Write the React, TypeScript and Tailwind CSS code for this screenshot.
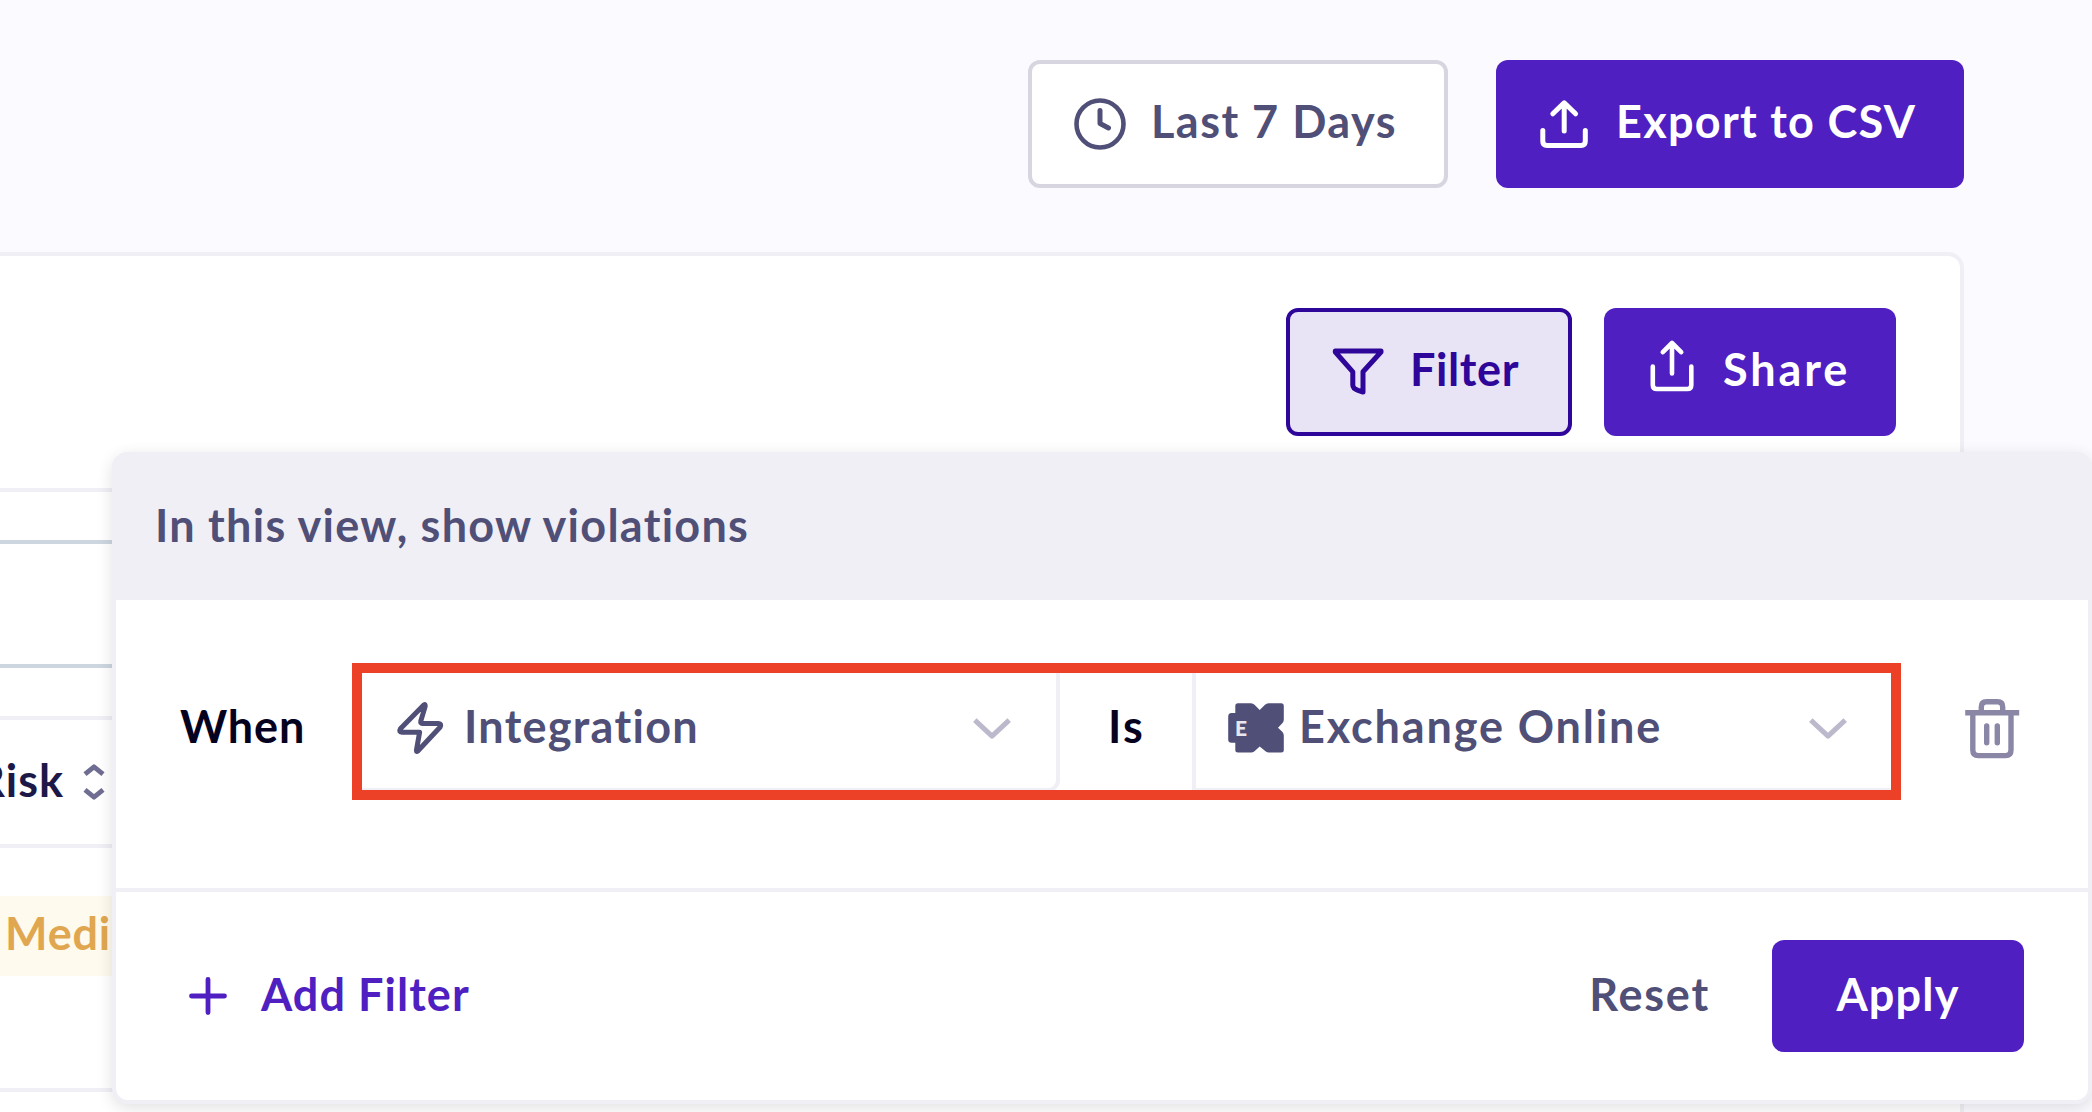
import React from "react";

const ClockIcon = () => (
  <svg className="size-14 shrink-0" viewBox="0 0 56 56" fill="none" stroke="currentColor" strokeLinecap="round" strokeLinejoin="round">
    <circle cx="28" cy="28" r="23.5" strokeWidth="4.6" />
    <path d="M28 14.5V27.5L36.5 32" strokeWidth="5" />
  </svg>
);

const ExportIcon = () => (
  <svg className="size-14 shrink-0" viewBox="0 0 56 56" fill="none" stroke="currentColor" strokeWidth="5" strokeLinecap="round" strokeLinejoin="round">
    <path d="M28.2 35V7M16.8 17.8L28.2 6.8L39.6 17.8" />
    <path d="M6.8 34.5V45.2Q6.8 49.4 11 49.4H45.1Q49.3 49.4 49.3 45.2V34.5" />
  </svg>
);

const FunnelIcon = () => (
  <svg className="mb-1 size-14 shrink-0" viewBox="0 0 56 56" fill="none" stroke="currentColor" strokeWidth="5" strokeLinejoin="round">
    <path d="M5.3 8.9H51V10L33 29.8V50L28 48.4Q22.8 46.5 22.8 43V29.8L5.3 10Z" />
  </svg>
);

const ShareIcon = () => (
  <svg className="mb-4 h-14 w-12 shrink-0" viewBox="0 0 48 56" fill="none" stroke="currentColor" strokeWidth="4.6" strokeLinecap="round" strokeLinejoin="round">
    <path d="M24 37.5V7M14.8 16.2L24 7L33.2 16.2" />
    <path d="M4.8 30.5V49Q4.8 53 8.8 53H39.3Q43.3 53 43.3 49V30.5" />
  </svg>
);

const BoltIcon = () => (
  <svg className="mt-1 h-14 w-[52px] shrink-0" viewBox="0 0 52 56" fill="none" stroke="currentColor" strokeWidth="5" strokeLinecap="round" strokeLinejoin="round">
    <path d="M30 4.8L6.4 28.8Q4.4 32 8 32.3H25.6L22.4 50.5Q22.4 52 23.8 51L46 27.2Q48 23.6 44.4 23.4H28.5Q26.3 23.2 26.8 21L31.2 6.4Q31.4 4 30 4.8Z" />
  </svg>
);

const ChevronIcon = () => (
  <svg className="mt-1.5 h-6 w-10 shrink-0 text-[#bbb9cb]" viewBox="0 0 40 24" fill="none" stroke="currentColor" strokeWidth="5" strokeLinejoin="round">
    <path d="M2.8 3.2L20 19.2L37.2 3.2" />
  </svg>
);

const ExchangeIcon = () => (
  <svg className="mt-1 h-[52px] w-14 shrink-0" viewBox="0 0 56 52">
    <path
      fill="currentColor"
      d="M7.3 11V4Q7.3 1.3 10 1.3H23Q25 1.3 26.5 2.8L31.7 8L37 2.8Q38.5 1.3 40.5 1.3H53.2Q55.8 1.3 55.8 4V17.5Q55.8 19.5 54.5 21L50 25.7L54.5 30Q55.8 31.5 55.8 33.5V48Q55.8 50.5 53.2 50.5H41Q39 50.5 37.5 49.2L31.7 44.4L26.5 49.2Q25 50.5 23 50.5H10Q7.3 50.5 7.3 48V40.8H3.5Q0.2 40.8 0.2 37.5V14.5Q0.2 11 3.5 11Z"
    />
    <text x="7" y="33.8" fill="#e9e8ef" fontSize="21" fontWeight="900" fontFamily="Lato, sans-serif">E</text>
  </svg>
);

const TrashIcon = () => (
  <svg className="h-16 w-14 shrink-0" viewBox="0 0 56 64" fill="none" stroke="currentColor" strokeWidth="5.4" strokeLinejoin="round">
    <path d="M1.2 15.7H55.2" />
    <path d="M17.3 15V10Q17.3 4.8 22.5 4.8H33.5Q38.7 4.8 38.7 10V15" />
    <path d="M8.8 16V53Q8.8 58.6 14.4 58.6H41.4Q47 58.6 47 53V16" />
    <path d="M22.7 29V45.7M33.3 29V45.7" strokeLinecap="round" />
  </svg>
);

const SortIcon = () => (
  <svg className="h-9 w-6 shrink-0 text-[#706d92]" viewBox="0 0 24 36" fill="none" stroke="currentColor" strokeWidth="4.8" strokeLinejoin="round">
    <path d="M3 10.2L12 2.8L21 10.2M3 25.8L12 33.2L21 25.8" />
  </svg>
);

const PlusIcon = () => (
  <svg className="size-10 shrink-0" viewBox="0 0 40 40" stroke="currentColor" strokeWidth="4.8" strokeLinecap="round">
    <path d="M20 3.5V36.5M3.5 20H36.5" />
  </svg>
);

export default function App() {
  return (
    <div className="relative h-[1112px] w-[2092px] overflow-hidden whitespace-nowrap bg-[#fbfaff] font-['Lato',sans-serif] text-[45px] font-bold leading-[56px] text-[#504f77]">
      <header className="flex h-[252px] justify-end gap-12 pr-32 pt-[60px]">
        <button className="flex h-32 w-[420px] items-center rounded-xl border-4 border-[#d6d5e0] bg-white pl-10">
          <ClockIcon />
          <span className="ml-[23px] pb-1.5 tracking-[1.49px]">Last 7 Days</span>
        </button>
        <button className="flex h-32 w-[468px] items-center rounded-xl bg-[#4f1fc1] pl-10 text-white">
          <ExportIcon />
          <span className="ml-6 pb-1.5 tracking-[1.28px]">Export to CSV</span>
        </button>
      </header>

      <main className="h-[900px] w-[1964px] rounded-tr-2xl border-r-4 border-t-4 border-[#f0eff5] bg-white">
        <div className="flex h-[232px] justify-end gap-8 pr-16 pt-[52px]">
          <button className="flex h-32 w-[286px] items-center rounded-xl border-4 border-[#2e0699] bg-[#e8e4f5] pl-10 text-[#2e0699]">
            <FunnelIcon />
            <span className="ml-6 pb-1.5 tracking-[0.6px]">Filter</span>
          </button>
          <button className="flex h-32 w-[292px] items-center rounded-xl bg-[#4f1fc1] pl-11 text-white">
            <ShareIcon />
            <span className="ml-[27px] pb-1.5 tracking-[2.9px]">Share</span>
          </button>
        </div>
        <div className="h-[52px] border-t-4 border-[#f0eff5]" />
        <div className="h-32 border-y-4 border-[#cdd5e0]" />
        <div className="h-12" />
        <div className="flex h-[132px] items-center border-y-4 border-[#f0eff5]">
          <div className="flex w-[64px] justify-end pb-[5px] text-[#1c1848]">
            <span className="tracking-[1px]">Risk</span>
          </div>
          <div className="ml-[18px] flex">
            <SortIcon />
          </div>
        </div>
        <div className="flex h-60 items-start pt-12">
          <div className="h-20 w-[200px] bg-[#fefaed] pl-[5px] pt-[9px] tracking-[0.8px] text-[#e0a750]">Medium</div>
        </div>
        <div className="border-t-4 border-[#f0eff5]" />
      </main>

      {/* Filter popover */}
      <section className="absolute left-28 top-[452px] flex h-[652px] w-[1980px] flex-col rounded-2xl border-4 border-[#f0eff5] bg-white shadow-[0_4px_16px_rgba(0,0,0,0.12)]">
        <div className="-mx-1 -mt-1 flex h-[148px] items-center rounded-t-2xl bg-[#f0eff5] pl-[43px]">
          <span className="pb-[3px] tracking-[1.26px]">In this view, show violations</span>
        </div>
        <div className="flex h-[292px] border-b-4 border-[#f0eff5] pl-16 pt-16">
          <div className="flex h-32 w-[172px] items-center pb-1 tracking-[0.88px] text-[#05021f]">When</div>
          <div className="relative flex h-32 w-[1549px]">
            <div className="flex w-[708px] items-center rounded-br-xl border-b-4 border-r-4 border-[#f0eff5] pl-[42px] pr-11">
              <BoltIcon />
              <span className="ml-[18px] tracking-[1.28px]">Integration</span>
              <span className="ml-auto">
                <ChevronIcon />
              </span>
            </div>
            <div className="flex w-[132px] items-center pb-1 pl-12 tracking-[2.2px] text-[#05021f]">Is</div>
            <div className="flex flex-1 items-center border-b-4 border-l-4 border-[#f0eff5] pl-8 pr-[53px]">
              <ExchangeIcon />
              <span className="ml-[15px] tracking-[1.86px]">Exchange Online</span>
              <span className="ml-auto">
                <ChevronIcon />
              </span>
            </div>
            <div className="pointer-events-none absolute inset-x-0 -bottom-[8px] -top-[1px] border-[10px] border-[#ec4027]" />
          </div>
          <div className="ml-[63px] pt-[33px] text-[#8a87a6]">
            <TrashIcon />
          </div>
        </div>
        <div className="flex flex-1 items-center pl-[72px] pr-16">
          <div className="flex items-center text-[#4f1fc1]">
            <PlusIcon />
            <span className="ml-[33px] pb-1 tracking-[1.06px]">Add Filter</span>
          </div>
          <span className="ml-auto pb-1 tracking-[1.8px]">Reset</span>
          <button className="ml-[62px] flex h-28 w-[252px] items-center justify-center rounded-xl bg-[#4f1fc1] pb-1 tracking-[1.2px] text-white">Apply</button>
        </div>
      </section>
    </div>
  );
}
